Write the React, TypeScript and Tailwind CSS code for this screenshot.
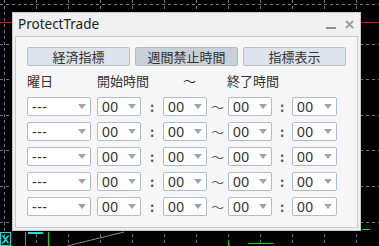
import React from "react";

const jp = { fontFamily: '"Noto Sans CJK JP", "Noto Sans", sans-serif' };
const latin = { fontFamily: '"Noto Sans", "Liberation Sans", sans-serif' };
const field = { fontFamily: '"Liberation Sans", Arial, sans-serif' };

const ChartBackground: React.FC = () => {
  const vx = Array.from({ length: 12 }, (_, i) => 4 + i * 32);
  const hy = [4, 44, 79, 115, 150, 186, 222];
  return (
    <svg className="absolute inset-0" width="379" height="246">
      <rect width="379" height="246" fill="#000" />
      {vx.map((x) => (
        <line key={x} x1={x + 0.5} y1="0" x2={x + 0.5} y2="246" stroke="#6f7c8a" strokeDasharray="3 3" />
      ))}
      {hy.map((y) => (
        <line key={y} x1="0" y1={y + 0.5} x2="379" y2={y + 0.5} stroke="#6f7c8a" strokeDasharray="3 3" />
      ))}
      <line x1="0" y1="22.5" x2="379" y2="22.5" stroke="#ff0000" />
      {/* bottom-left marker */}
      <rect x="0.5" y="232.5" width="10" height="13" fill="none" stroke="#00e5e5" />
      <path d="M2.5 235.5 L8.5 243.5 M8.5 235.5 L2.5 243.5" stroke="#00e5e5" strokeWidth="1.5" />
      <line x1="25.5" y1="232" x2="25.5" y2="246" stroke="#00e000" />
      <line x1="48.5" y1="232" x2="48.5" y2="246" stroke="#00e000" />
      <rect x="28" y="232" width="15" height="2" fill="#00e5e5" />
      <line x1="67" y1="246" x2="124" y2="232" stroke="#8a8a8a" />
      <line x1="248" y1="243.5" x2="273" y2="243.5" stroke="#00e000" />
      <line x1="228.5" y1="241" x2="228.5" y2="246" stroke="#00e000" />
      <line x1="362" y1="229.5" x2="370" y2="229.5" stroke="#00e000" />
    </svg>
  );
};

const Select: React.FC<{ value: string; w: string }> = ({ value, w }) => (
  <div
    className={`${w} h-[19px] shrink-0 bg-white border border-[#b0bccb] rounded-[2px] flex items-center justify-between pl-[4px] pr-[4px]`}
  >
    <span className="text-[14px] leading-none text-[#333] tracking-[0.5px]" style={field}>
      {value}
    </span>
    <svg width="8" height="5" viewBox="0 0 8 5">
      <path d="M0 0 L8 0 L4 5 Z" fill="#a3a3a3" />
    </svg>
  </div>
);

const Sep: React.FC<{ ch: string; w: string; bold?: boolean }> = ({ ch, w, bold }) => (
  <div
    className={`${w} shrink-0 flex items-center justify-center text-[13px] text-[#4b5a6e] ${bold ? "font-bold" : ""}`}
    style={jp}
  >
    {ch}
  </div>
);

const Row: React.FC = () => (
  <div className="flex h-[19px]">
    <Select value="---" w="w-[64px]" />
    <div className="w-[6px] shrink-0" />
    <Select value="00" w="w-[44px]" />
    <Sep ch=":" w="w-[22px]" bold />
    <Select value="00" w="w-[44px]" />
    <Sep ch="～" w="w-[21px]" />
    <Select value="00" w="w-[44px]" />
    <Sep ch=":" w="w-[20px]" bold />
    <Select value="00" w="w-[45px]" />
  </div>
);

const TabButton: React.FC<{ label: string; active?: boolean }> = ({ label, active }) => (
  <button
    className={`w-[103px] h-[19px] rounded-[2px] border text-[13px] leading-none text-[#333] flex items-center justify-center ${
      active ? "bg-[#c9d0d8] border-[#b2bcc7]" : "bg-[#dde3eb] border-[#b6c1cd]"
    }`}
    style={jp}
  >
    {label}
  </button>
);

export default function App() {
  return (
    <div className="relative w-[379px] h-[246px] overflow-hidden bg-black">
      <ChartBackground />
      <div className="absolute left-[12px] top-[12px] w-[349px] h-[219px] bg-[#f0f0f0] border border-[#c8c8c8] flex flex-col">
        <div className="h-[23px] flex items-center justify-between pl-[5px] pr-[6px]">
          <span className="text-[13.5px] text-[#222]" style={latin}>
            ProtectTrade
          </span>
          <div className="flex items-center gap-[9px]">
            <svg width="10" height="10" viewBox="0 0 10 10">
              <rect x="0" y="7" width="10" height="2" fill="#8e8e8e" />
            </svg>
            <svg width="9" height="9" viewBox="0 0 9 9">
              <path d="M1 1 L8 8 M8 1 L1 8" stroke="#a0a0a0" strokeWidth="2" />
            </svg>
          </div>
        </div>
        <div className="mx-[2px] mb-[2px] flex-1 bg-[#f6f6f6] border border-[#c8c8c8] pl-[11px] pt-[10px]">
          <div className="flex gap-[5px]">
            <TabButton label="経済指標" />
            <TabButton label="週間禁止時間" active />
            <TabButton label="指標表示" />
          </div>
          <div className="flex h-[18px] mt-[6px] items-center text-[13px] text-[#333]" style={jp}>
            <span className="w-[70px]">曜日</span>
            <span className="w-[86px]">開始時間</span>
            <span className="w-[44px]">～</span>
            <span>終了時間</span>
          </div>
          <div className="flex flex-col gap-[6px] mt-[7px]">
            <Row />
            <Row />
            <Row />
            <Row />
            <Row />
          </div>
        </div>
      </div>
    </div>
  );
}
